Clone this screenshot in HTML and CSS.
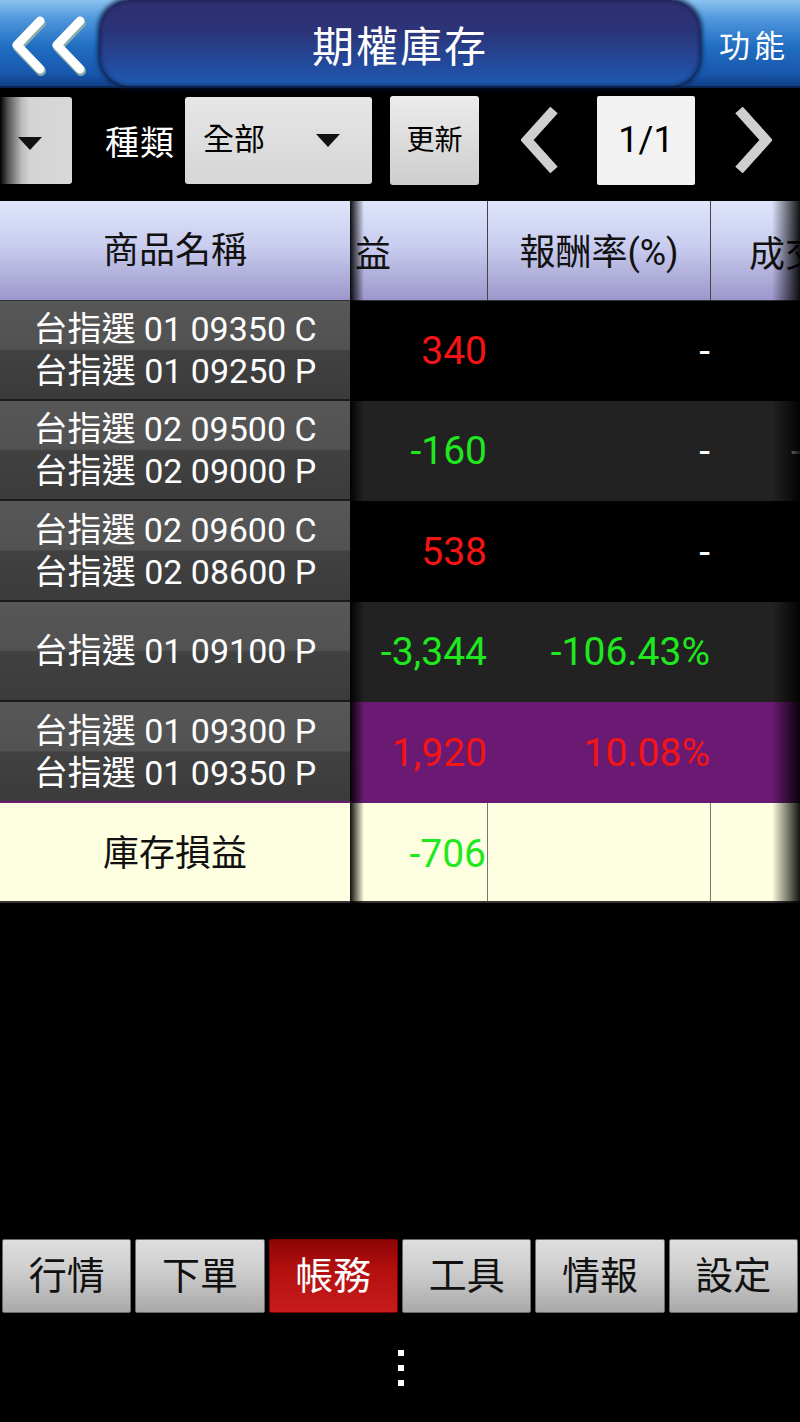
FILE: index.html
```html
<!DOCTYPE html>
<html>
<head>
	<meta charset="utf-8">
	<title>期權庫存</title>
	<link rel="stylesheet" href="styles.css">
</head>
<body>
	<div class="page">
		<div class="topbar">
			<div class="back">
				<svg width="100" height="86" viewBox="0 0 100 86">
					<polyline points="40,21 17,45 40,69" fill="none" stroke="#8aa" stroke-width="10" stroke-linecap="round" stroke-linejoin="round" transform="translate(1,2)"/>
					<polyline points="80,21 57,45 80,69" fill="none" stroke="#8aa" stroke-width="10" stroke-linecap="round" stroke-linejoin="round" transform="translate(1,2)"/>
					<polyline points="40,21 17,45 40,69" fill="none" stroke="#fff" stroke-width="9" stroke-linecap="round" stroke-linejoin="round"/>
					<polyline points="80,21 57,45 80,69" fill="none" stroke="#fff" stroke-width="9" stroke-linecap="round" stroke-linejoin="round"/>
				</svg>
			</div>
			<div class="title">期權庫存</div>
			<div class="func">功能</div>
		</div>

		<div class="toolbar">
			<div class="drop-left"><span class="tri"></span></div>
			<div class="label">種類</div>
			<div class="select">全部<span class="tri"></span></div>
			<div class="btn">更新</div>
			<svg class="arrow" width="38" height="66" viewBox="0 0 38 66">
				<polyline points="33,3 6,33 33,63" fill="none" stroke="#cfcfcf" stroke-width="10"/>
			</svg>
			<div class="pager">1/1</div>
			<svg class="arrow" width="38" height="66" viewBox="0 0 38 66">
				<polyline points="5,3 32,33 5,63" fill="none" stroke="#cfcfcf" stroke-width="10"/>
			</svg>
		</div>

		<div class="grid">
			<div class="row head">
				<div class="c-name">商品名稱</div>
				<div class="c-pl">益</div>
				<div class="c-rate">報酬率(%)</div>
				<div class="c-deal">成交</div>
			</div>
			<div class="row">
				<div class="c-name">台指選 01 09350 C<br>台指選 01 09250 P</div>
				<div class="c-pl red">340</div>
				<div class="c-rate white">-</div>
				<div class="c-deal"></div>
			</div>
			<div class="row gray">
				<div class="c-name">台指選 02 09500 C<br>台指選 02 09000 P</div>
				<div class="c-pl green">-160</div>
				<div class="c-rate white">-</div>
				<div class="c-deal white">-</div>
			</div>
			<div class="row tall">
				<div class="c-name">台指選 02 09600 C<br>台指選 02 08600 P</div>
				<div class="c-pl red">538</div>
				<div class="c-rate white">-</div>
				<div class="c-deal"></div>
			</div>
			<div class="row gray">
				<div class="c-name">台指選 01 09100 P</div>
				<div class="c-pl green">-3,344</div>
				<div class="c-rate green">-106.43%</div>
				<div class="c-deal"></div>
			</div>
			<div class="row purple tall">
				<div class="c-name">台指選 01 09300 P<br>台指選 01 09350 P</div>
				<div class="c-pl red">1,920</div>
				<div class="c-rate red">10.08%</div>
				<div class="c-deal"></div>
			</div>
			<div class="row total">
				<div class="c-name">庫存損益</div>
				<div class="c-pl green">-706</div>
				<div class="c-rate"></div>
				<div class="c-deal"></div>
			</div>
		</div>

		<div class="tabs">
			<div class="tab">行情</div>
			<div class="tab">下單</div>
			<div class="tab on">帳務</div>
			<div class="tab">工具</div>
			<div class="tab">情報</div>
			<div class="tab">設定</div>
		</div>

		<div class="navbar">
			<div class="dots"><i></i><i></i><i></i></div>
		</div>
	</div>
</body>
</html>
```

FILE: styles.css
```css
*{margin:0;padding:0;box-sizing:border-box;}
body{
	background:#000;
	font-family:Roboto,"Noto Sans CJK TC",sans-serif;
	color:#000;
}
.page{
	width:800px;
	height:1422px;
	display:flex;
	flex-direction:column;
	overflow:hidden;
}

/* top bar */
.topbar{
	height:88px;
	display:flex;
	background:linear-gradient(#8cc2ee 0,#4f97dc 22%,#1f6dc2 55%,#1858ad 85%,#123f88 100%);
	border-bottom:2px solid #0b2553;
}
.back{
	width:100px;
	height:86px;
}
.title{
	flex:1;
	height:86px;
	border-radius:30px;
	background:linear-gradient(#2e2f6e 0,#2c3477 35%,#234a9c 75%,#1d5cb2 100%);
	box-shadow:0 0 5px 2px #0c1b45,inset 0 0 4px #111a44;
	color:#fff;
	font-size:42px;
	letter-spacing:2px;
	text-align:center;
	line-height:86px;
	padding-top:5px;
}
.func{
	width:100px;
	height:86px;
	color:#fff;
	font-size:31px;
	letter-spacing:4px;
	line-height:86px;
	padding:4px 0 0 19px;
}

/* toolbar */
.toolbar{
	height:111px;
	display:flex;
	align-items:center;
	padding-bottom:7px;
}
.tri{
	display:inline-block;
	width:0;
	height:0;
	border-left:12px solid transparent;
	border-right:12px solid transparent;
	border-top:13px solid #111;
}
.drop-left{
	width:72px;
	height:87px;
	border-radius:0 3px 3px 0;
	background:linear-gradient(to right,#000 0,#555 8px,#bdbdbd 22px,#d4d4d4 30px,#d8d8d8 100%);
	padding:38px 0 0 18px;
}
.label{
	margin-left:33px;
	color:#fff;
	font-size:34px;
	letter-spacing:1px;
}
.select{
	margin-left:10px;
	width:187px;
	height:87px;
	border-radius:3px;
	background:linear-gradient(#e6e6e6,#d6d6d6);
	font-size:31px;
	line-height:84px;
	padding-left:18px;
	display:flex;
	align-items:center;
	gap:51px;
}
.btn{
	margin-left:18px;
	width:89px;
	height:89px;
	border-radius:3px;
	background:linear-gradient(#ececec,#cdcdcd);
	font-size:28px;
	text-align:center;
	line-height:89px;
}
.arrow{
	margin-left:42px;
}
.pager{
	margin-left:38px;
	width:98px;
	height:89px;
	border-radius:2px;
	background:#f2f2f2;
	font-size:36px;
	text-align:center;
	line-height:89px;
}
.pager + .arrow{
	margin-left:39px;
}

/* grid */
.grid{
	position:relative;
	margin-top:2px;
}
.grid:before{
	content:"";
	position:absolute;
	left:350px;
	top:0;
	bottom:0;
	width:14px;
	background:linear-gradient(to right,rgba(0,0,0,.95),rgba(0,0,0,0));
}
.grid:after{
	content:"";
	position:absolute;
	right:0;
	top:0;
	bottom:0;
	width:28px;
	background:linear-gradient(to right,rgba(0,0,0,0),rgba(0,0,0,.92));
}
.row{
	display:flex;
	height:100px;
	align-items:stretch;
	background:#000;
}
.row.tall{height:101px;}
.row > div{
	display:flex;
	align-items:center;
}
.c-name{
	width:350px;
	justify-content:center;
	text-align:center;
	color:#fff;
	font-size:34px;
	line-height:42px;
	background:linear-gradient(#575757 0,#525252 49%,#414141 51%,#3b3b3b 100%);
	border-bottom:2px solid #1b1b1b;
}
.c-pl{
	width:138px;
	justify-content:flex-end;
	font-size:39px;
	padding-right:1px;
}
.c-rate{
	width:223px;
	justify-content:flex-end;
	font-size:39px;
	padding-right:1px;
}
.c-deal{
	flex:1;
	font-size:39px;
	padding-left:80px;
	overflow:hidden;
	white-space:nowrap;
}
.row.gray{background:#222;}
.row.purple{background:#6a1a72;}
.row.purple .c-name{border-bottom-color:#6a1a72;}

.row.head{
	height:100px;
	background:linear-gradient(#dfe5fb 0,#c9cdef 45%,#9c97ca 100%);
	border-bottom:1px solid #333;
}
.row.head > div{
	font-size:36px;
	color:#111;
	border:none;
	background:none;
}
.row.head .c-name{
	background:linear-gradient(#dfe5fb 0,#c9cdef 45%,#9c97ca 100%);
}
.row.head .c-pl{
	justify-content:flex-start;
	padding-left:5px;
	border-right:1px solid #444;
}
.row.head .c-rate{
	justify-content:center;
	padding:0 0 4px;
	border-right:1px solid #444;
}
.row.head .c-deal{
	padding-left:38px;
}

.row.total{
	background:#fefee0;
	border-bottom:2px solid #333;
}
.row.total .c-name{
	background:#fefee0;
	color:#111;
	font-size:36px;
	border-bottom:none;
	padding-top:4px;
}
.row.total .c-pl{border-right:1px solid #777;padding-top:4px;}
.row.total .c-rate{border-right:1px solid #777;}

.red{color:#f41414;}
.green{color:#1fe81f;}
.white{color:#fff;}

/* tabs */
.tabs{
	margin-top:auto;
	display:grid;
	grid-template-columns:repeat(6,1fr);
	gap:4px;
	padding:0 2px;
}
.tab{
	height:74px;
	border:1px solid #6a6a6a;
	border-radius:2px;
	background:linear-gradient(#dedede 0,#cfcfcf 40%,#a9a9a9 100%);
	font-size:38px;
	text-align:center;
	line-height:72px;
	color:#111;
}
.tab.on{
	background:linear-gradient(#8e0505 0,#b30f0f 40%,#c81c1c 100%);
	border-color:#700;
	color:#fff;
}

.navbar{
	height:109px;
	display:flex;
	align-items:center;
	justify-content:center;
}
.dots{
	display:flex;
	flex-direction:column;
	gap:9px;
	padding-left:1px;
}
.dots i{
	display:block;
	width:6px;
	height:6px;
	background:#fff;
}
```
